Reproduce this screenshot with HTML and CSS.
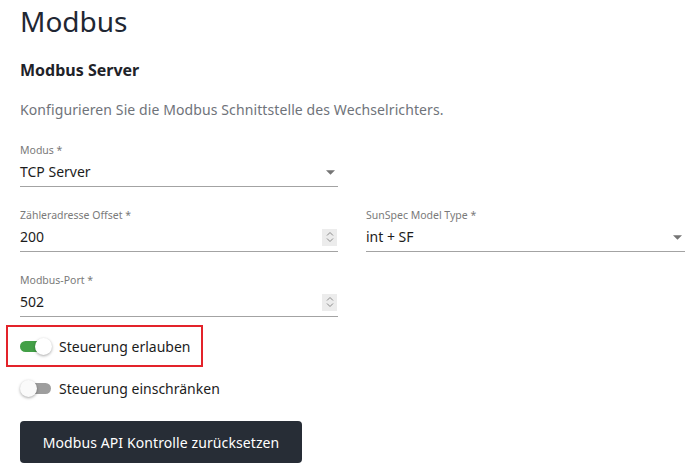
FILE: index.html
```html
<!DOCTYPE html>
<html lang="de">
<head>
<meta charset="utf-8">
<title>Modbus</title>
<link rel="stylesheet" href="styles.css">
</head>
<body>
<div class="page">
  <h1 class="title">Modbus</h1>
  <h2 class="section">Modbus Server</h2>
  <p class="desc">Konfigurieren Sie die Modbus Schnittstelle des Wechselrichters.</p>

  <div class="grid">
    <div class="field">
      <div class="label">Modus *</div>
      <div class="control">
        <span class="value">TCP Server</span>
        <svg class="arrow" width="9" height="5" viewBox="0 0 10 5"><path d="M0 0h10L5 5z" fill="#757575"/></svg>
      </div>
    </div>
    <div></div>

    <div class="field">
      <div class="label">Zähleradresse Offset *</div>
      <div class="control">
        <span class="value">200</span>
        <span class="spin"><svg width="8" height="12" viewBox="0 0 8 12"><path d="M1 4.5L4 1.5L7 4.5M1 7.5L4 10.5L7 7.5" fill="none" stroke="#8a8a8a" stroke-width="1"/></svg></span>
      </div>
    </div>
    <div class="field">
      <div class="label">SunSpec Model Type *</div>
      <div class="control">
        <span class="value">int + SF</span>
        <svg class="arrow" width="9" height="5" viewBox="0 0 10 5"><path d="M0 0h10L5 5z" fill="#757575"/></svg>
      </div>
    </div>

    <div class="field">
      <div class="label">Modbus-Port *</div>
      <div class="control">
        <span class="value">502</span>
        <span class="spin"><svg width="8" height="12" viewBox="0 0 8 12"><path d="M1 4.5L4 1.5L7 4.5M1 7.5L4 10.5L7 7.5" fill="none" stroke="#8a8a8a" stroke-width="1"/></svg></span>
      </div>
    </div>
    <div></div>
  </div>

  <div class="highlight">
    <div class="switch-row">
      <span class="switch on"><span class="track"></span><span class="thumb"></span></span>
      <span class="switch-text">Steuerung erlauben</span>
    </div>
  </div>

  <div class="switch-row second">
    <span class="switch"><span class="track"></span><span class="thumb"></span></span>
    <span class="switch-text">Steuerung einschränken</span>
  </div>

  <button class="btn">Modbus API Kontrolle zurücksetzen</button>
</div>
</body>
</html>
```

FILE: styles.css
```css
* { box-sizing: border-box; }
html, body { margin: 0; padding: 0; background: #fff; }
body {
  font-family: "Noto Sans", "Open Sans", sans-serif;
  color: #212529;
}
.page {
  padding: 4px 10px 0 20px;
}
.title {
  margin: 0;
  font-size: 28px;
  font-weight: 400;
  line-height: 34px;
  color: #1f2733;
}
.section {
  margin: 20px 0 0;
  font-size: 16px;
  font-weight: 700;
  line-height: 24px;
  color: #1f2329;
}
.desc {
  margin: 18px 0 0;
  font-size: 14px;
  line-height: 20px;
  letter-spacing: 0.1px;
  color: #6f737a;
}
.grid {
  display: grid;
  grid-template-columns: 318px 319px;
  column-gap: 28px;
  row-gap: 21px;
  margin-top: 23px;
}
.field { display: flex; flex-direction: column; }
.label {
  font-size: 10.5px;
  line-height: 14px;
  color: #7a7a7a;
}
.control {
  display: flex;
  align-items: center;
  justify-content: space-between;
  margin-top: 5px;
  padding-bottom: 4px;
  border-bottom: 1px solid #a3a3a3;
  height: 25px;
}
.value {
  font-size: 14px;
  line-height: 20px;
  color: #1c1c1c;
}
.arrow { margin-right: 3px; }
.spin {
  display: flex;
  align-items: center;
  justify-content: center;
  width: 15px;
  height: 17px;
  background: #ececec;
  margin-right: 1px;
}
.highlight {
  display: inline-block;
  margin: 8px 0 0 -14px;
  border: 2px solid #e3232a;
  padding: 8px 11px 6px 12px;
}
.switch-row {
  display: flex;
  align-items: center;
  height: 24px;
  gap: 8px;
}
.switch-row.second { margin-top: 10px; }
.switch {
  position: relative;
  width: 31px;
  height: 18px;
  flex: none;
}
.track {
  position: absolute;
  left: 1px;
  top: 3px;
  width: 30px;
  height: 11px;
  border-radius: 6px;
  background: #9e9e9e;
}
.switch.on .track { background: #43a047; left: 0; }
.thumb {
  position: absolute;
  top: 0;
  left: 0;
  width: 17px;
  height: 17px;
  border-radius: 50%;
  background: #fafafa;
  box-shadow: 0 1px 3px rgba(0,0,0,0.35);
}
.switch.on .thumb { left: 15px; background: #fff; }
.switch-text {
  font-size: 14px;
  line-height: 20px;
  color: #1c1c1c;
}
.btn {
  display: block;
  margin-top: 20px;
  width: 282px;
  height: 42px;
  border: 0;
  border-radius: 4px;
  background: #272d36;
  color: #fff;
  font-family: "Noto Sans", "Open Sans", sans-serif;
  font-size: 14px;
  letter-spacing: 0.1px;
  padding: 0;
}
```
